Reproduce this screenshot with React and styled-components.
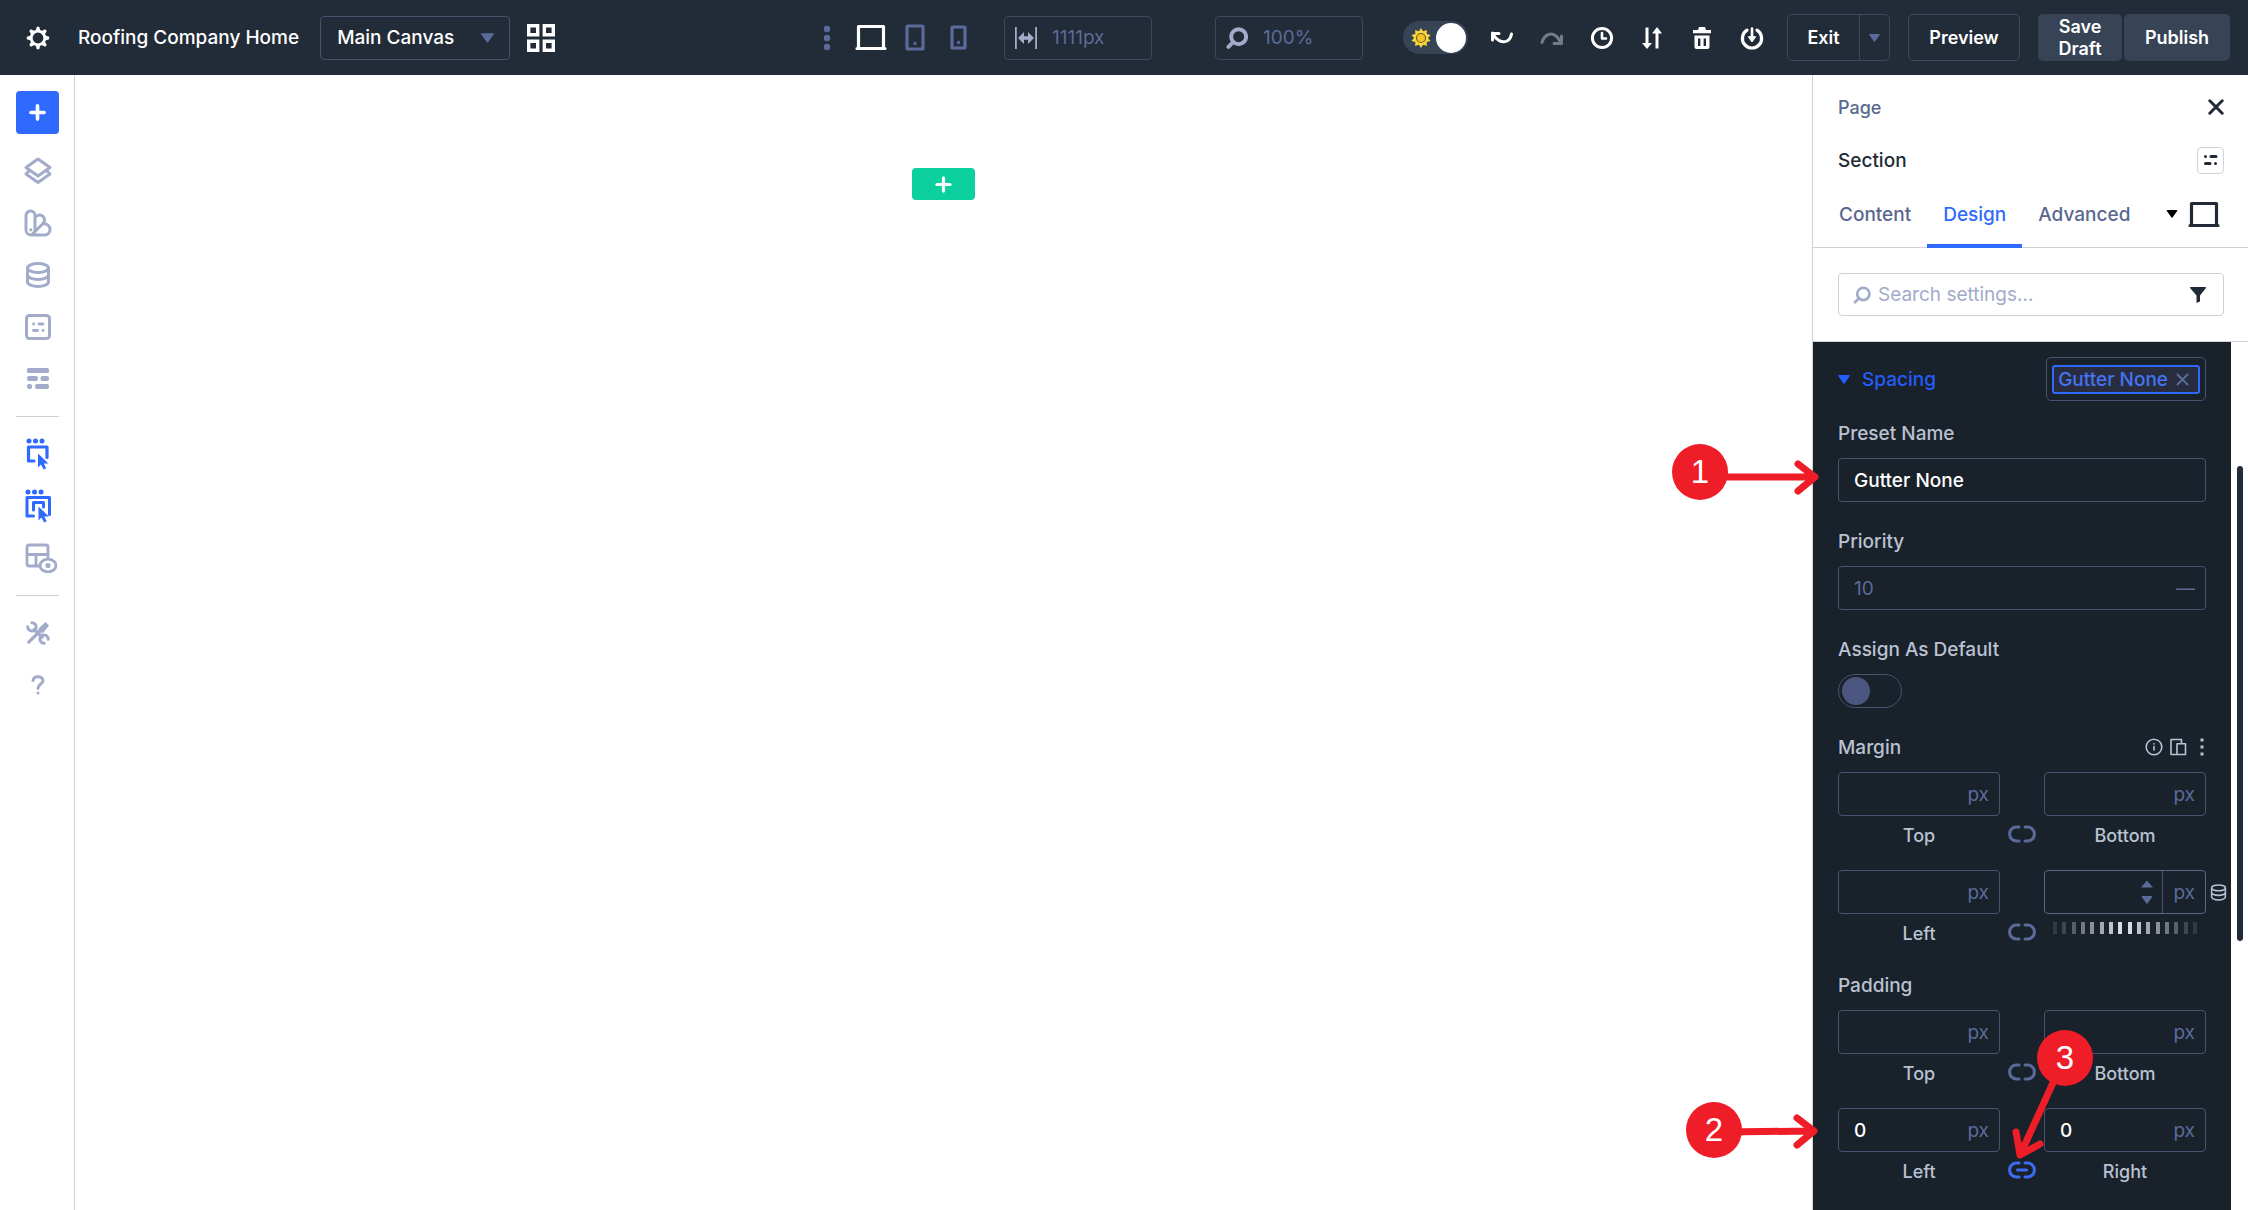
import React, { useId } from "react";
import styled, { createGlobalStyle, css } from "styled-components";

const c = {
  bar: "#222b38",
  barLine: "#3d485c",
  dark: "#19212a",
  slate: "#364456",
  line: "#4a5270",
  muted: "#5b6b99",
  tab: "#5a678e",
  icon: "#a2acca",
  blue: "#2f6aff",
  ink: "#212a36",
  rule: "#ced2da",
  label: "#b9c2d2",
  red: "#ee1d27",
};

const GlobalStyle = createGlobalStyle`
  *, *::before, *::after { box-sizing: border-box; }
  body { margin: 0; background: #fff; }
  body, button, input, select {
    font-family: Inter, "Liberation Sans", sans-serif;
    font-size: 19px;
    font-weight: 500;
  }
  button { padding: 0; border: 0; background: none; color: inherit; }
  svg { display: block; flex: none; }
`;

const Page = styled.div`
  position: relative;
  display: grid;
  grid-template-rows: 75px minmax(0, 1fr);
  height: 100vh;
  overflow: hidden;
`;

/* ---------- top bar ---------- */

const TopBar = styled.header`
  display: flex;
  align-items: center;
  padding: 0 18px 0 26px;
  background: ${c.bar};
  color: #fff;
`;

const Group = styled.div`
  display: flex;
  align-items: center;
  gap: ${(p) => p.$gap || 0}px;
  flex: ${(p) => (p.$grow ? 1 : "none")};
  margin-left: ${(p) => p.$before || 0}px;
`;

const IconButton = styled.button`
  display: grid;
  place-items: center;
  flex: none;
  width: ${(p) => p.$w || 24}px;
  height: ${(p) => p.$h || 28}px;
  color: ${(p) => p.$color || "inherit"};
`;

const Title = styled.h1`
  margin: 0 21px 0 28px;
  font-size: 19px;
  line-height: 24px;
  font-weight: 500;
  white-space: nowrap;
`;

const SelectBox = styled.div`
  display: grid;
  align-items: center;
  width: 190px;
  height: 44px;
  margin-right: 17px;
  > * { grid-area: 1 / 1; }
  svg { justify-self: end; margin-right: 16px; color: ${c.muted}; pointer-events: none; }
`;

const Select = styled.select`
  appearance: none;
  width: 100%;
  height: 100%;
  padding: 0 16px;
  border: 1px solid ${c.line};
  border-radius: 4px;
  background: transparent;
  color: #fff;
`;

const BarField = styled.label`
  display: flex;
  align-items: center;
  gap: 15px;
  width: 148px;
  height: 44px;
  padding: 0 10px;
  border: 1px solid ${c.barLine};
  border-radius: 4px;
  color: ${c.icon};
`;

const BarInput = styled.input`
  flex: 1;
  min-width: 0;
  padding: 0;
  border: 0;
  outline: 0;
  background: transparent;
  color: ${c.muted};
  font-weight: 400;
`;

const ThemeSwitch = styled.label`
  display: flex;
  align-items: center;
  justify-content: space-between;
  width: 65px;
  height: 33px;
  padding: 0 2px 0 8px;
  border-radius: 17px;
  background: ${c.slate};
`;

const ThemeInput = styled.input`
  appearance: none;
  width: 30px;
  height: 30px;
  margin: 0;
  border-radius: 50%;
  background: #fff;
`;

const ButtonBase = css`
  height: 47px;
  border-radius: 5px;
  font-size: 18px;
  font-weight: 600;
  line-height: 22px;
  color: #fff;
`;

const OutlineButton = styled.button`
  ${ButtonBase}
  width: 112px;
  border: 1px solid ${c.barLine};
`;

const SolidButton = styled.button`
  ${ButtonBase}
  width: ${(p) => p.$w}px;
  padding: 0 16px;
  background: ${c.slate};
`;

const SplitButton = styled.div`
  display: flex;
  height: 47px;
  border: 1px solid ${c.barLine};
  border-radius: 5px;
`;

const SplitPart = styled.button`
  display: grid;
  place-items: center;
  width: ${(p) => p.$w}px;
  font-size: 18px;
  font-weight: 600;
  & + & { border-left: 1px solid ${c.barLine}; color: ${c.muted}; }
`;

/* ---------- body ---------- */

const Body = styled.div`
  display: grid;
  grid-template-columns: 75px minmax(0, 1fr) 436px;
  min-height: 0;
`;

const Rail = styled.nav`
  display: flex;
  flex-direction: column;
  align-items: center;
  padding-top: 16px;
  border-right: 1px solid ${c.rule};
`;

const AddModule = styled.button`
  display: grid;
  place-items: center;
  width: 43px;
  height: 43px;
  margin-bottom: 11px;
  border-radius: 4px;
  background: ${c.blue};
  color: #fff;
`;

const RailButton = styled.button`
  display: grid;
  place-items: center;
  width: 52px;
  height: 52px;
  padding-left: 2px;
  color: ${(p) => (p.$active ? c.blue : c.icon)};
`;

const RailRule = styled.hr`
  width: 43px;
  margin: 11px 0;
  border: 0;
  border-top: 1px solid ${c.rule};
`;

const Canvas = styled.main`
  display: flex;
  justify-content: center;
  align-items: flex-start;
  padding-top: 93px;
`;

const AddRow = styled.button`
  display: grid;
  place-items: center;
  width: 63px;
  height: 32px;
  border-radius: 4px;
  background: #0bcf9d;
  color: #fff;
`;

/* ---------- settings panel ---------- */

const Panel = styled.aside`
  display: flex;
  flex-direction: column;
  min-height: 0;
  border-left: 1px solid ${c.rule};
`;

const PanelRow = styled.div`
  display: flex;
  align-items: center;
  justify-content: space-between;
  flex: none;
  height: ${(p) => p.$h}px;
  padding: 0 24px 0 25px;
`;

const Crumb = styled.a`
  color: ${c.tab};
  font-size: 18px;
  text-decoration: none;
`;

const PanelTitle = styled.h2`
  margin: 0;
  color: ${c.ink};
  font-size: 19px;
  font-weight: 500;
`;

const SmallBox = styled.button`
  display: grid;
  place-items: center;
  width: 27px;
  height: 27px;
  border: 1px solid ${c.rule};
  border-radius: 4px;
  color: ${c.ink};
`;

const TabBar = styled.div`
  display: flex;
  flex: none;
  align-items: stretch;
  height: 67px;
  padding: 0 28px 0 10px;
  border-bottom: 1px solid ${c.rule};
`;

const Tabs = styled.div`
  display: flex;
  flex: 1;
  margin-bottom: -1px;
`;

const Tab = styled.button`
  padding: 4px 16px 0;
  border-bottom: 4px solid ${(p) => (p["aria-selected"] ? c.blue : "transparent")};
  color: ${(p) => (p["aria-selected"] ? c.blue : c.tab)};
`;

const SearchArea = styled.div`
  flex: none;
  padding: 25px 24px 25px 25px;
  border-bottom: 1px solid ${c.rule};
`;

const SearchBox = styled.label`
  display: flex;
  align-items: center;
  gap: 7px;
  height: 43px;
  padding: 0 16px 0 14px;
  border: 1px solid ${c.rule};
  border-radius: 4px;
  color: ${c.icon};
`;

const SearchInput = styled.input`
  flex: 1;
  min-width: 0;
  padding: 0;
  border: 0;
  outline: 0;
  background: transparent;
  font-weight: 400;
  &::placeholder { color: ${c.icon}; }
`;

const ScrollArea = styled.div`
  display: grid;
  grid-template-columns: minmax(0, 1fr) 17px;
  flex: 1;
  min-height: 0;
`;

const Track = styled.div`
  display: grid;
  grid-template-rows: 143fr 547fr 310fr;
  justify-content: center;
`;

const Thumb = styled.div`
  grid-row: 2;
  width: 6px;
  border-radius: 3px;
  background: ${c.bar};
`;

const Options = styled.section`
  display: flex;
  flex-direction: column;
  gap: 27px;
  min-height: 0;
  padding: 15px 25px 0;
  background: ${c.dark};
`;

const OptionHead = styled.div`
  display: flex;
  align-items: center;
  justify-content: space-between;
  height: 44px;
  margin-bottom: -7px;
`;

const Toggle = styled.button`
  display: flex;
  align-items: center;
  gap: 12px;
  color: #235dfb;
`;

const PresetSlot = styled.div`
  display: flex;
  align-items: center;
  height: 44px;
  padding: 0 5px;
  border: 1px solid ${c.line};
  border-radius: 5px;
`;

const Chip = styled.button`
  display: flex;
  align-items: center;
  gap: 8px;
  height: 29px;
  padding: 0 9px 0 4px;
  border: 2px solid ${c.blue};
  border-radius: 3px;
  background: #272d3f;
  color: #4474f0;
  svg { color: ${c.muted}; }
`;

const Field = styled.div`
  display: flex;
  flex-direction: column;
  flex: none;
  gap: 13px;
`;

const LabelRow = styled.div`
  display: flex;
  align-items: center;
  justify-content: space-between;
  height: 24px;
  color: ${c.label};
`;

const LabelIcons = styled.div`
  display: flex;
  align-items: center;
  margin-right: -8px;
`;

const Box = styled.div`
  position: relative;
  display: flex;
  align-items: center;
  height: 44px;
  border: 1px solid ${(p) => (p.$hot ? "#5c6688" : c.line)};
  border-radius: 4px;
  color: ${c.muted};
`;

const TextInput = styled.input`
  flex: 1;
  min-width: 0;
  height: 100%;
  padding: 0 0 0 15px;
  border: 0;
  outline: 0;
  background: transparent;
  color: #fff;
  &::placeholder { color: ${c.muted}; font-weight: 400; }
`;

const Unit = styled.span`
  padding: 0 10px;
  font-weight: 400;
`;

const UnitCell = styled(Unit)`
  display: grid;
  align-items: center;
  height: 100%;
  border-left: 1px solid ${c.line};
`;

const Stepper = styled.div`
  display: grid;
  gap: 8px;
  margin-right: 9px;
`;

const StepButton = styled.button`
  display: block;
  height: 8px;
`;

const DynamicButton = styled.button`
  position: absolute;
  left: calc(100% + 5px);
  color: ${c.label};
`;

const Switch = styled.input`
  appearance: none;
  display: flex;
  align-items: center;
  width: 64px;
  height: 34px;
  margin: 0;
  padding: 0 3px;
  border: 1px solid ${c.line};
  border-radius: 17px;
  &::before {
    content: "";
    width: 28px;
    height: 28px;
    border-radius: 50%;
    background: #4a5680;
  }
`;

const Sides = styled.div`
  display: grid;
  gap: 22px;
`;

const SideRow = styled.div`
  display: grid;
  grid-template-columns: minmax(0, 1fr) 44px minmax(0, 1fr);
  grid-template-rows: 44px 24px;
  row-gap: 8px;
`;

const SideLabel = styled.label`
  grid-row: 2;
  grid-column: ${(p) => p.$col};
  justify-self: center;
  color: ${c.label};
  font-size: 18px;
  line-height: 24px;
`;

const SideBox = styled(Box)`
  grid-row: 1;
  grid-column: ${(p) => p.$col};
`;

const LinkButton = styled.button`
  display: grid;
  place-items: center;
  grid-row: 2;
  grid-column: 2;
  height: 20px;
  color: ${(p) => (p.$on ? "#3b6cf2" : c.muted)};
`;

const Ruler = styled.div`
  display: flex;
  justify-content: space-between;
  grid-row: 2;
  grid-column: 3;
  height: 12px;
  padding: 0 9px;
`;

const Tick = styled.span`
  width: 4px;
  background: #e4e8f2;
`;

/* ---------- callouts over the page ---------- */

const Callout = styled.div`
  position: absolute;
  top: ${(p) => p.$top}px;
  right: ${(p) => p.$right}px;
  pointer-events: none;
`;

const Badge = styled.span`
  position: absolute;
  top: 0;
  left: ${(p) => p.$left || 0}px;
  display: grid;
  place-items: center;
  width: 56px;
  height: 56px;
  border-radius: 50%;
  background: ${c.red};
  color: #fff;
  font: 400 33px/56px "Liberation Sans", Arial, sans-serif;
`;

/* ---------- icons ---------- */

const S = ({ w = 24, h, box, sw = 0, children }) => (
  <svg
    width={w}
    height={h || w}
    viewBox={box || `0 0 ${w} ${h || w}`}
    fill={sw ? "none" : "currentColor"}
    stroke={sw ? "currentColor" : "none"}
    strokeWidth={sw || undefined}
    strokeLinecap="round"
    strokeLinejoin="round"
    aria-hidden="true"
  >
    {children}
  </svg>
);

const teeth = (n) => Array.from({ length: n }, (_, i) => (i * 360) / n);

const Gear = () => (
  <S w={24}>
    <circle cx="12" cy="12" r="6.8" fill="none" stroke="currentColor" strokeWidth="2.8" />
    {teeth(8).map((a) => (
      <path key={a} d="M9.6 5 10.8 .8h2.4L14.4 5z" transform={`rotate(${a} 12 12)`} />
    ))}
  </S>
);

const Down = ({ w = 12, h = 9 }) => (
  <S w={w} h={h} box="0 0 12 9">
    <path d="M.8 0h10.4c.7 0 1 .6.6 1.1L6.6 8.4a.8.8 0 0 1-1.2 0L.2 1.1C-.2.6.1 0 .8 0z" />
  </S>
);

const Up = () => (
  <S w={12} h={8}>
    <path d="M6 .5 12 7.5H0z" />
  </S>
);

const GridIcon = () => (
  <svg width="28" height="28" viewBox="0 0 28 28" fill="none" stroke="currentColor" strokeWidth="3.400" aria-hidden="true">
    <path d="M1.700 1.700h9v9h-9zM17.300 1.700h9v9h-9zM1.700 17.300h9v9h-9zM17.300 17.300h9v9h-9z" />
  </svg>
);

const Dots = () => (
  <S w={8} h={26}>
    <circle cx="4" cy="4" r="3.200" />
    <circle cx="4" cy="13" r="3.200" />
    <circle cx="4" cy="22" r="3.200" />
  </S>
);

const Laptop = () => (
  <S w={32} h={27} sw={3.2}>
    <path d="M3.500 24V2.500h25V24M2 24.500h28" />
  </S>
);

const Tablet = () => (
  <S w={20} h={27} sw={3.2}>
    <rect x="2" y="2" width="16" height="23" rx="1" />
    <circle cx="10" cy="19.500" r="1" strokeWidth="1.500" />
  </S>
);

const Phone = () => (
  <S w={18} h={25} sw={3.2}>
    <rect x="2" y="2" width="13" height="21" rx="1" />
    <circle cx="8.500" cy="17.500" r="1" strokeWidth="1.500" />
  </S>
);

const WidthIcon = () => (
  <S w={22} h={22}>
    <path d="M0 0h1.800v22H0zM20.200 0H22v22h-1.800zM3 11l6-6v4.200h4V5l6 6-6 6v-4.200H9V17z" />
  </S>
);

const Search = ({ w = 20, sw = 3.6 }) => (
  <S w={w} box="0 0 20 20" sw={sw}>
    <circle cx="11.500" cy="8.800" r="6.800" />
    <path d="M5.800 14.500 2.200 18" />
  </S>
);

const Sun = () => (
  <svg width="20" height="20" viewBox="0 0 20 20" fill="#fbd83a" aria-hidden="true">
    {teeth(10).map((a) => (
      <path key={a} d="M6.800 5 10 0l3.200 5z" transform={`rotate(${a} 10 10)`} />
    ))}
    <circle cx="10" cy="10" r="6.500" />
    <circle cx="10" cy="10" r="4.500" fill="#f3c623" stroke="#6f6230" strokeWidth="1.200" />
  </svg>
);

const Undo = () => (
  <S w={24} h={14} sw={3}>
    <path d="M2.500 2v7M2.500 2.500H9M3 3c3 6 9 9.500 14 7 2.600-1.400 4-4 4.500-7" />
  </S>
);

const Redo = () => (
  <S w={24} h={14} sw={3}>
    <path d="M21.500 5v7.500H14M21 12C18 5 13 2 8.500 3.500 5 4.800 3 8 2 11.500" />
  </S>
);

const Clock = () => (
  <S w={24} sw={3}>
    <circle cx="12" cy="12" r="9.600" />
    <path d="M12 7v5.500h4" strokeWidth="2.600" />
  </S>
);

const Swap = () => (
  <S w={22} h={24}>
    <path d="M4.500 1.500h3V17H11l-5 6-5-6h3.500zM14.500 22.500h3V7.500H21l-5-6.500-5 6.500h3.500z" />
  </S>
);

const Trash = () => (
  <S w={20} h={24}>
    <path d="M1 4h5l1-3h6l1 3h5v3.200H1zM2.500 9.500h15V21a2 2 0 0 1-2 2h-11a2 2 0 0 1-2-2zM6 12.500V20h2.400v-7.500zm5.600 0V20H14v-7.500z" fillRule="evenodd" />
  </S>
);

const Power = () => (
  <S w={24} sw={3.2}>
    <path d="M7 4.200a9.600 9.600 0 1 0 10 0" />
    <path d="M12 2.500v9" strokeWidth="2.600" />
    <path d="m8.500 11 3.500 5 3.500-5z" fill="currentColor" strokeWidth="1" />
  </S>
);

const Plus = ({ w = 16, sw = 3.4 }) => (
  <S w={w} box="0 0 16 16" sw={sw}>
    <path d="M8 1.800v12.400M1.800 8h12.400" />
  </S>
);

const Layers = () => (
  <S w={28} sw={3}>
    <path d="M14 2 26 10.500 14 19 2 10.500zM4.500 14.500 2 17l12 8.500L26 17l-2.500-2.500" />
  </S>
);

const Swatches = () => (
  <S w={28} sw={3}>
    <path d="M2 6.500a4.500 4.500 0 0 1 9 0V22a4 4 0 0 1-4 4 5 5 0 0 1-5-5zM11 8.500c2.500-3 6-3.200 8-1s2 5-.5 7.500L8 25.500M20 14.800c3 .2 6 2.400 6 5.600s-2.400 5.600-5.500 5.600H7" />
    <circle cx="6.800" cy="20.800" r=".8" strokeWidth="1.600" />
  </S>
);

const Database = ({ w = 26, sw = 3 }) => (
  <S w={w} box="0 0 26 26" sw={sw}>
    <ellipse cx="13" cy="6" rx="10.500" ry="4.400" />
    <path d="M2.500 6v14c0 2.400 4.700 4.400 10.500 4.400s10.500-2 10.500-4.400V6M2.500 13c0 2.400 4.700 4.400 10.500 4.400s10.500-2 10.500-4.400" />
  </S>
);

const SectionGlyph = ({ w = 14, h = 12 }) => (
  <S w={w} h={h} box="0 0 14 12">
    <rect x="0" y="1" width="3" height="3" rx="1.500" />
    <rect x="5.500" y="1" width="8" height="3" rx="1.500" />
    <rect x="0" y="8" width="7.500" height="3" rx="1.500" />
    <rect x="10" y="8" width="3" height="3" rx="1.500" />
  </S>
);

const SectionIcon = () => (
  <S w={26}>
    <rect x="1.500" y="1.500" width="23" height="23" rx="3" fill="none" stroke="currentColor" strokeWidth="3" />
    <path d="M8.500 10h.1M14 10h4M8.500 16.500h4M18 16.500h.1" stroke="currentColor" strokeWidth="2.800" strokeLinecap="round" />
  </S>
);

const Wireframe = () => (
  <S w={24} h={22}>
    <rect x="1" y="0" width="22" height="5" rx="1.500" />
    <rect x="1" y="8" width="11" height="5" rx="2" />
    <rect x="14.500" y="8" width="8.500" height="5" rx="2" />
    <rect x="1" y="16" width="5" height="5" rx="2" />
    <rect x="9" y="16" width="14" height="5" rx="2" />
  </S>
);

const ClickOne = () => (
  <S w={26} h={32}>
    <circle cx="4" cy="3" r="2.500" />
    <circle cx="10.500" cy="3" r="2.500" />
    <circle cx="17" cy="3" r="2.500" />
    <path d="M9 23H3.500V9H22v10.500" fill="none" stroke="currentColor" strokeWidth="3.200" strokeLinejoin="round" />
    <path d="M13 15.500v14l3-3 2.600 5 2.600-1.200-2.400-4.800h4.600z" />
  </S>
);

const ClickMany = () => (
  <S w={28} h={34}>
    <circle cx="4" cy="3" r="2.500" />
    <circle cx="10.500" cy="3" r="2.500" />
    <circle cx="17" cy="3" r="2.500" />
    <path d="M9.500 27H3V8.500h22.500v17M9.500 21V13.500h10V18" fill="none" stroke="currentColor" strokeWidth="3" strokeLinejoin="round" />
    <path d="M14.500 17.500v14l3-3 2.600 5 2.600-1.200-2.400-4.800h4.600z" />
  </S>
);

const LayoutEye = () => (
  <S w={38} h={30} box="-6 0 38 30" sw={2.8}>
    <path d="M14 23H4a2 2 0 0 1-2-2V4a2 2 0 0 1 2-2h17a2 2 0 0 1 2 2v10M2 11.500h21M11 11.500V22" />
    <ellipse cx="23" cy="22.500" rx="8" ry="6.300" />
    <circle cx="23" cy="22.500" r="1.200" />
  </S>
);

const Tools = () => (
  <S w={24}>
    <path d="M19.500 1 23 4.500l-6.500 8L12 8z" />
    <path d="M14 10 2.800 21.200" stroke="currentColor" strokeWidth="3.200" strokeLinecap="round" />
    <path d="M8.500 8.500l7.500 7.500" stroke="currentColor" strokeWidth="3.600" />
    <path d="M5.800 1.700A4.200 4.200 0 1 1 1.700 5.800M18.200 22.300A4.200 4.200 0 1 1 22.300 18.200" fill="none" stroke="currentColor" strokeWidth="3" />
  </S>
);

const Help = () => (
  <S w={14} h={20} sw={3}>
    <path d="M2 5.500C2.300 3 4.300 1.700 7 1.700s5 1.500 5 4c0 3.300-5 3.500-5 7.500" />
    <circle cx="7" cy="18" r=".6" strokeWidth="2" />
  </S>
);

const Close = ({ w = 16, sw = 3 }) => (
  <S w={w} box="0 0 16 16" sw={sw}>
    <path d="m1.800 1.800 12.400 12.400M14.200 1.800 1.800 14.200" />
  </S>
);

const Funnel = () => (
  <S w={16}>
    <path d="M.5 0h15c.4 0 .6.6.4 1L10 8.500v6L6.500 16V8.500L.1 1C-.1.600.1 0 .5 0z" />
  </S>
);

const Info = () => (
  <S w={18} sw={1.6}>
    <circle cx="9" cy="9" r="7.800" />
    <path d="M9 8.500V12M9 5.800v.1" />
  </S>
);

const Devices = () => (
  <S w={18} sw={1.6}>
    <path d="M7.500 16.500H2V1.500h10.500v4M8 5.800h8.500v10.700H8z" />
  </S>
);

const More = () => (
  <S w={4} h={18}>
    <path d="M.5.500h3v3h-3zM.5 7.500h3v3h-3zM.5 14.500h3v3h-3z" />
  </S>
);

const ChainIcon = ({ on }) => (
  <S w={28} h={18} sw={3}>
    <path d="M11 2H8.500C5 2 1.600 4.500 1.600 9S5 16 8.500 16H11M17 2h2.500c3.500 0 6.900 2.500 6.900 7s-3.400 7-6.900 7H17" />
    {on && <path d="M9.500 9h9" />}
  </S>
);

/* ---------- pieces ---------- */

const Side = ({ label, value, col, active, prefix }) => {
  const id = useId();
  return (
    <>
      <SideBox $col={col} $hot={active}>
        <TextInput id={id} defaultValue={value} aria-label={active ? `${prefix} ${label}` : undefined} />
        {active ? (
          <>
            <Stepper>
              <StepButton aria-label="Increase"><Up /></StepButton>
              <StepButton aria-label="Decrease"><Down h={8} /></StepButton>
            </Stepper>
            <UnitCell>px</UnitCell>
            <DynamicButton aria-label="Dynamic content"><Database w={17} sw={2.4} /></DynamicButton>
          </>
        ) : (
          <Unit>px</Unit>
        )}
      </SideBox>
      {active ? (
        <Ruler>
          {Array.from({ length: 16 }, (_, i) => (
            <Tick key={i} style={{ opacity: Math.max(0.12, 1 - Math.abs(i - 7.5) * 0.125) }} />
          ))}
        </Ruler>
      ) : (
        <SideLabel $col={col} htmlFor={id}>{label}</SideLabel>
      )}
    </>
  );
};

const Pair = ({ name, a, b, linked, active, value }) => (
  <SideRow>
    <Side prefix={name} label={a} value={value} col={1} />
    <LinkButton $on={linked} aria-label={`Link ${name} ${a} and ${b}`}>
      <ChainIcon on={linked} />
    </LinkButton>
    <Side prefix={name} label={b} value={value} col={3} active={active} />
  </SideRow>
);

const railItems = [
  ["Layers", Layers], ["Presets", Swatches], ["Variables", Database],
  ["Sections", SectionIcon], ["Wireframe", Wireframe],
];

export default function App() {
  return (
    <Page>
      <GlobalStyle />
      <TopBar>
        <Group $grow>
          <IconButton aria-label="Settings"><Gear /></IconButton>
          <Title>Roofing Company Home</Title>
          <SelectBox>
            <Select aria-label="Canvas" defaultValue="main">
              <option value="main">Main Canvas</option>
            </Select>
            <Down w={13} h={10} />
          </SelectBox>
          <IconButton $w={28} aria-label="Grid"><GridIcon /></IconButton>
        </Group>

        <Group>
          <IconButton $w={8} $color={c.muted} aria-label="View options"><Dots /></IconButton>
          <Group $before={24} $gap={18}>
            <IconButton $w={32} aria-label="Desktop"><Laptop /></IconButton>
            <IconButton $w={20} $color={c.muted} aria-label="Tablet"><Tablet /></IconButton>
            <Group $before={7}>
              <IconButton $w={18} $color={c.muted} aria-label="Phone"><Phone /></IconButton>
            </Group>
          </Group>
          <Group $before={36} $gap={63}>
            <BarField><WidthIcon /><BarInput aria-label="Canvas width" defaultValue="1111px" /></BarField>
            <BarField><Search w={22} /><BarInput aria-label="Zoom" defaultValue="100%" /></BarField>
          </Group>
        </Group>

        <Group $before={40}>
          <ThemeSwitch><Sun /><ThemeInput type="checkbox" aria-label="Light mode" /></ThemeSwitch>
          <Group $before={22} $gap={26}>
            <IconButton aria-label="Undo"><Undo /></IconButton>
            <IconButton $color="#717b89" aria-label="Redo"><Redo /></IconButton>
            <IconButton aria-label="History"><Clock /></IconButton>
            <IconButton aria-label="Portability"><Swap /></IconButton>
            <IconButton aria-label="Clear layout"><Trash /></IconButton>
            <IconButton aria-label="Save to library"><Power /></IconButton>
          </Group>
          <Group $before={23} $gap={18}>
            <SplitButton>
              <SplitPart $w={71}>Exit</SplitPart>
              <SplitPart $w={30} aria-label="Exit options"><Down w={11} h={8} /></SplitPart>
            </SplitButton>
            <OutlineButton>Preview</OutlineButton>
            <Group $gap={2}>
              <SolidButton $w={84}>Save Draft</SolidButton>
              <SolidButton $w={106}>Publish</SolidButton>
            </Group>
          </Group>
        </Group>
      </TopBar>

      <Body>
        <Rail aria-label="Builder tools">
          <AddModule aria-label="Add"><Plus w={17} /></AddModule>
          {railItems.map(([name, Icon]) => (
            <RailButton key={name} aria-label={name}><Icon /></RailButton>
          ))}
          <RailRule />
          <RailButton $active aria-label="Click mode"><ClickOne /></RailButton>
          <RailButton $active aria-label="Multi select"><ClickMany /></RailButton>
          <RailButton aria-label="Layout view"><LayoutEye /></RailButton>
          <RailRule />
          <RailButton aria-label="Tools"><Tools /></RailButton>
          <RailButton aria-label="Help"><Help /></RailButton>
        </Rail>

        <Canvas>
          <AddRow aria-label="Add row"><Plus w={17} sw={3} /></AddRow>
        </Canvas>

        <Panel>
          <PanelRow $h={64}>
            <Crumb href="#page">Page</Crumb>
            <IconButton $w={16} $color={c.ink} aria-label="Close"><Close /></IconButton>
          </PanelRow>
          <PanelRow $h={42}>
            <PanelTitle>Section</PanelTitle>
            <SmallBox aria-label="Section type"><SectionGlyph /></SmallBox>
          </PanelRow>
          <TabBar>
            <Tabs role="tablist">
              <Tab role="tab" aria-selected={false}>Content</Tab>
              <Tab role="tab" aria-selected>Design</Tab>
              <Tab role="tab" aria-selected={false}>Advanced</Tab>
            </Tabs>
            <Group $gap={10}>
              <IconButton $w={12} $color="#000" aria-label="Choose device"><Down h={8} /></IconButton>
              <IconButton $w={32} $color={c.ink} aria-label="Desktop view"><Laptop /></IconButton>
            </Group>
          </TabBar>
          <SearchArea>
            <SearchBox>
              <Search w={18} sw={3} />
              <SearchInput aria-label="Search settings" placeholder="Search settings..." />
              <IconButton $w={18} $color={c.ink} aria-label="Filter"><Funnel /></IconButton>
            </SearchBox>
          </SearchArea>

          <ScrollArea>
            <Options>
              <OptionHead>
                <Toggle><Down /> Spacing</Toggle>
                <PresetSlot>
                  <Chip>Gutter None <Close w={13} sw={2.4} /></Chip>
                </PresetSlot>
              </OptionHead>

              <Field>
                <LabelRow as="label" htmlFor="preset-name">Preset Name</LabelRow>
                <Box><TextInput id="preset-name" defaultValue="Gutter None" /></Box>
              </Field>
              <Field>
                <LabelRow as="label" htmlFor="priority">Priority</LabelRow>
                <Box><TextInput id="priority" placeholder="10" /><Unit>—</Unit></Box>
              </Field>
              <Field>
                <LabelRow as="label" htmlFor="as-default">Assign As Default</LabelRow>
                <Switch id="as-default" type="checkbox" />
              </Field>

              <Field>
                <LabelRow>
                  <span>Margin</span>
                  <LabelIcons>
                    <IconButton aria-label="Help"><Info /></IconButton>
                    <IconButton aria-label="Responsive"><Devices /></IconButton>
                    <IconButton aria-label="More"><More /></IconButton>
                  </LabelIcons>
                </LabelRow>
                <Sides>
                  <Pair name="Margin" a="Top" b="Bottom" />
                  <Pair name="Margin" a="Left" b="Right" active />
                </Sides>
              </Field>
              <Field>
                <LabelRow>Padding</LabelRow>
                <Sides>
                  <Pair name="Padding" a="Top" b="Bottom" />
                  <Pair name="Padding" a="Left" b="Right" value="0" linked />
                </Sides>
              </Field>
            </Options>
            <Track><Thumb /></Track>
          </ScrollArea>
        </Panel>
      </Body>

      <Callout $top={444} $right={426}>
        <svg width="150" height="56" viewBox="0 0 150 56" fill="none" stroke={c.red} strokeWidth="7" strokeLinecap="round" strokeLinejoin="round" aria-hidden="true">
          <path d="M40 33h101M126 20l17 13-17 14" />
        </svg>
        <Badge>1</Badge>
      </Callout>
      <Callout $top={1102} $right={428}>
        <svg width="134" height="56" viewBox="0 0 134 56" fill="none" stroke={c.red} strokeWidth="7" strokeLinecap="round" strokeLinejoin="round" aria-hidden="true">
          <path d="M40 30l86-1M111 16l17 13-17 14" />
        </svg>
        <Badge>2</Badge>
      </Callout>
      <Callout $top={1030} $right={155}>
        <svg width="86" height="134" viewBox="0 0 86 134" fill="none" stroke={c.red} strokeWidth="7" strokeLinecap="round" strokeLinejoin="round" aria-hidden="true">
          <path d="M50 44 14 123M9 102l4 23 20-11" />
        </svg>
        <Badge $left={30}>3</Badge>
      </Callout>
    </Page>
  );
}
